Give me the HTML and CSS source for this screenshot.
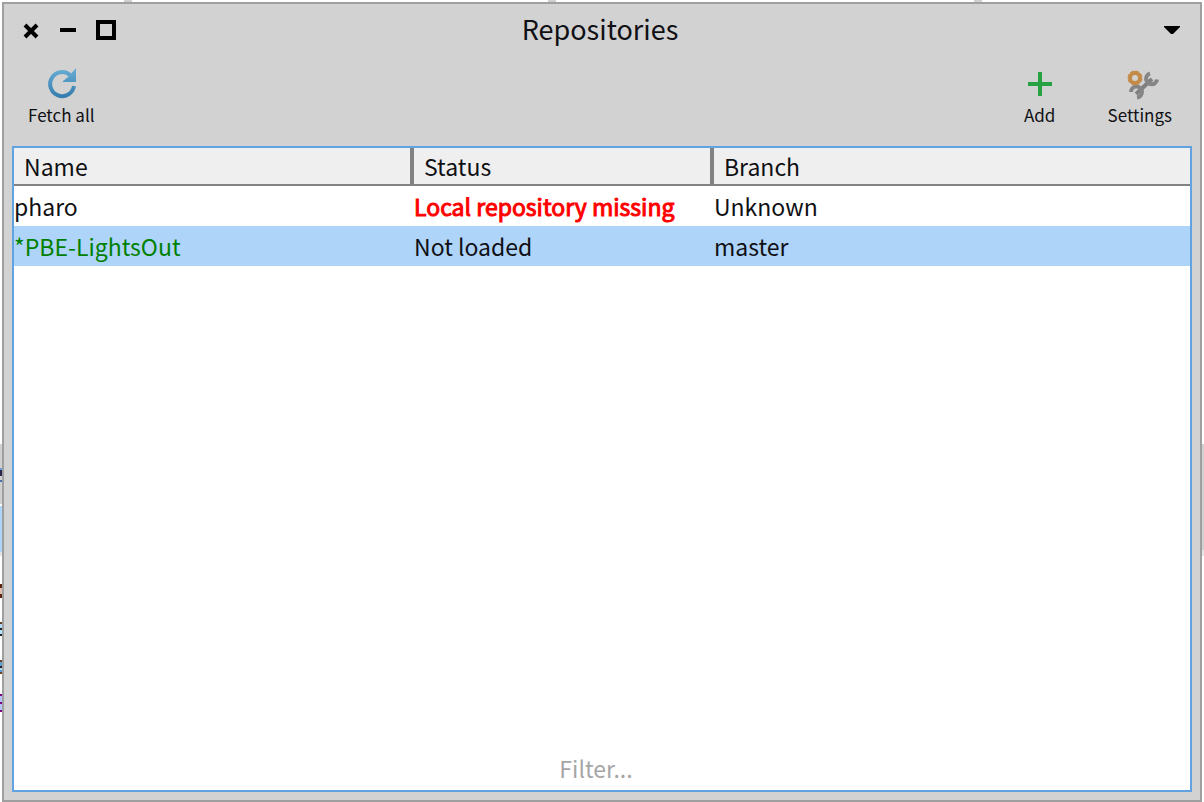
FILE: index.html
```html
<!DOCTYPE html>
<html lang="en">
<head>
<meta charset="utf-8">
<title>Repositories</title>
<link rel="stylesheet" href="styles.css">
</head>
<body>
<main class="window">
  <header class="titlebar">
    <div class="controls">
      <button class="control" type="button" aria-label="Close"><svg width="20" height="20" viewBox="0 0 20 20"><path d="M5 5l12 12M17 5L5 17" stroke="#000" stroke-width="4"/></svg></button>
      <button class="control" type="button" aria-label="Minimize"><svg width="20" height="20" viewBox="0 0 20 20"><path d="M2 8h16v4H2z"/></svg></button>
      <button class="control" type="button" aria-label="Maximize"><svg width="20" height="20" viewBox="0 0 20 20"><path d="M2 2h16v16H2z" fill="none" stroke="#000" stroke-width="4"/></svg></button>
    </div>
    <h1 class="title">Repositories</h1>
    <div class="menu-slot">
      <button class="control" type="button" aria-label="Window menu"><svg width="20" height="20" viewBox="0 0 20 20"><path d="M0 6h16v1l-7 7H7L0 7z"/></svg></button>
    </div>
  </header>
  <nav class="toolbar">
    <button class="tool" type="button">
      <svg width="32" height="32" viewBox="0 0 32 32">
        <defs><linearGradient id="fetch" x1="0" y1="0" x2="0" y2="32" gradientUnits="userSpaceOnUse"><stop offset="0" stop-color="#68aed4"/><stop offset="1" stop-color="#3078ac"/></linearGradient></defs>
        <path d="M29 18A12 12 0 1 1 25 7" fill="none" stroke="url(#fetch)" stroke-width="4"/>
        <path d="M31 0v14H18v-1l5-4z" fill="url(#fetch)"/>
      </svg>
      <span>Fetch all</span>
    </button>
    <span class="spacer"></span>
    <button class="tool" type="button">
      <svg width="32" height="32" viewBox="0 0 32 32"><path d="M4 16h24M16 4v24" stroke="#27a243" stroke-width="4"/></svg>
      <span>Add</span>
    </button>
    <button class="tool" type="button">
      <svg width="40" height="32" viewBox="0 0 40 32">
        <path d="M16 26L32 11" stroke="#808080" stroke-width="4"/>
        <path d="M30 5.500a5.500 5.500 0 1 0 7 6M11 24a5.500 5.500 0 1 1 6 5.500" fill="none" stroke="#858585" stroke-width="4"/>
        <circle cx="15" cy="10" r="5" fill="none" stroke="#c48a48" stroke-width="4"/>
        <circle cx="15" cy="10" r="7" fill="none" stroke="#c48a48" stroke-width="1" stroke-dasharray="4 1.500"/>
      </svg>
      <span>Settings</span>
    </button>
  </nav>
  <section class="panel">
    <table class="repos">
      <colgroup><col class="col-name"><col class="col-status"><col></colgroup>
      <thead><tr><th>Name</th><th>Status</th><th>Branch</th></tr></thead>
      <tbody>
        <tr><td>pharo</td><td class="missing">Local repository missing</td><td>Unknown</td></tr>
        <tr class="selected"><td class="modified">*PBE-LightsOut</td><td>Not loaded</td><td>master</td></tr>
      </tbody>
    </table>
    <input class="filter" type="text" placeholder="Filter..." aria-label="Filter">
  </section>
</main>
</body>
</html>
```
FILE: styles.css
```css
* { box-sizing: border-box; }
/* Slivers of the windows behind this one show along the edges. */
body {
  margin: 0;
  padding: 2px 2px 0;
  min-height: 100vh;
  display: flex;
  background:
    linear-gradient(#d0d0d0, #d0d0d0) 124px 0 / 8px 2px no-repeat,
    linear-gradient(#d0d0d0, #d0d0d0) 548px 0 / 8px 2px no-repeat,
    linear-gradient(#d0d0d0, #d0d0d0) 974px 0 / 8px 2px no-repeat,
    linear-gradient(#fff 444px, #d0d0d0 444px, #d0d0d0 550px, #e4e4e4 550px, #e4e4e4 556px, #fff 556px) 100% 0 / 2px 100% no-repeat,
    linear-gradient(
      #fff 444px, #d0d0d0 444px, #d0d0d0 468px, #6a9fd0 468px, #6a9fd0 470px,
      #28284c 470px, #28284c 476px, #d0d0d0 476px, #d0d0d0 480px,
      #4a70b0 480px, #4a70b0 482px, #d0d0d0 482px, #d0d0d0 504px,
      #fff 504px, #fff 506px, #aed4f9 506px, #aed4f9 552px, #e4e4e4 552px, #e4e4e4 556px,
      #fff 556px, #fff 584px, #5a2410 584px, #5a2410 588px, #e0c0b0 588px, #e0c0b0 594px,
      #5a2410 594px, #5a2410 598px, #fff 598px, #fff 622px, #604020 622px, #604020 624px,
      #b0dcf8 624px, #b0dcf8 628px, #202020 628px, #202020 630px, #b0e4ff 630px, #b0e4ff 634px,
      #202020 634px, #202020 636px, #fff 636px, #fff 660px, #704020 660px, #704020 662px,
      #5a9fd8 662px, #5a9fd8 666px, #202020 666px, #202020 668px, #b0dcf8 668px, #b0dcf8 670px,
      #5a9fd8 670px, #5a9fd8 672px, #704020 672px, #704020 674px, #fff 674px, #fff 694px,
      #800080 694px, #800080 696px, #b4c4f8 696px, #b4c4f8 702px, #800080 702px, #800080 704px,
      #b4c4f8 704px, #b4c4f8 710px, #800080 710px, #800080 712px, #fff 712px
    ) 0 0 / 2px 100% no-repeat,
    #fff;
  color: #101014;
  font-family: "Noto Sans CJK SC", "Noto Sans", sans-serif;
  font-size: 23px;
}
.window {
  flex: 1;
  display: flex;
  flex-direction: column;
  padding: 0 8px 8px;
  border: 2px solid #9f9f9f;
  background: #d2d2d2;
}
button { padding: 0; border: 0; background: none; color: inherit; font: inherit; }
svg { display: block; }
.titlebar {
  display: grid;
  grid-template-columns: 1fr auto 1fr;
  align-items: center;
  height: 52px;
  padding: 0 8px;
}
.controls { display: flex; gap: 18px; }
.title { margin: 0 4px 2px 0; font-size: 27px; font-weight: 400; line-height: 48px; }
.menu-slot { display: flex; justify-content: flex-end; }
.toolbar { display: flex; height: 90px; padding: 12px 20px 0 16px; }
.tool {
  display: flex;
  flex-direction: column;
  align-items: center;
  height: 62px;
  font-size: 17px;
  line-height: 30px;
}
.spacer { flex: 1; }
.tool + .tool { margin-left: 52px; }
.panel {
  flex: 1;
  display: flex;
  flex-direction: column;
  justify-content: space-between;
  border: 2px solid #60a3e0;
  background: #fff;
}
.repos { width: 100%; table-layout: fixed; border-collapse: separate; border-spacing: 0; }
.col-name { width: 400px; }
.col-status { width: 300px; }
th {
  height: 38px;
  padding: 0 10px;
  border-right: 4px solid #828282;
  border-bottom: 2px solid #828282;
  background: #efefef;
  font-weight: 400;
  line-height: 36px;
  text-align: left;
}
th:last-child { border-right: 0; }
td { height: 40px; padding: 0; line-height: 40px; }
.missing { color: #f00; -webkit-text-stroke: 1px #f00; }
.selected { background: #aed4f9; }
.modified { color: #008000; }
.filter {
  width: 100%;
  height: 40px;
  margin-bottom: 2px;
  padding: 0 12px 0 0;
  border: 0;
  outline: 0;
  background: none;
  font: inherit;
  text-align: center;
}
.filter::placeholder { color: #a6a6a6; opacity: 1; }
```
